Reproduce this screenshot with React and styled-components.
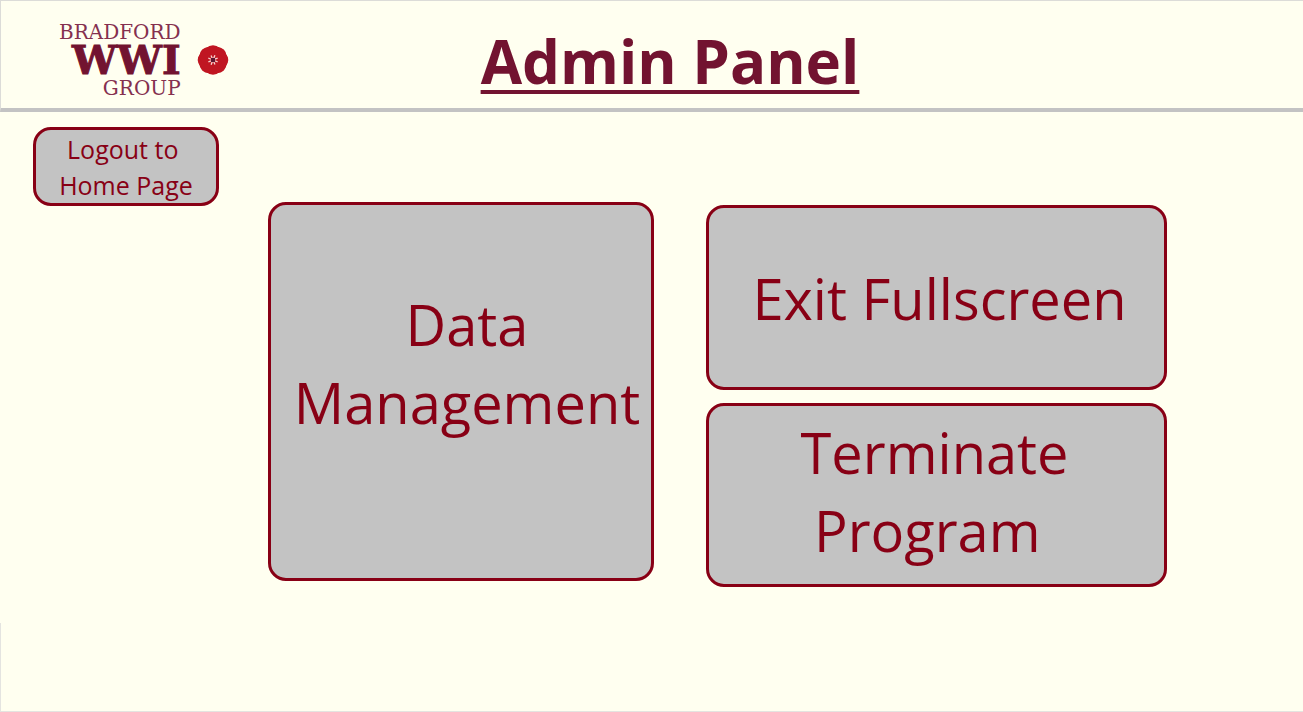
import React from "react";
import styled, { createGlobalStyle } from "styled-components";

const GlobalStyle = createGlobalStyle`
  * { box-sizing: border-box; }
  body { margin: 0; background: #fffff0; }
`;

const Page = styled.div`
  display: flex;
  flex-direction: column;
  min-height: 100vh;
  border-top: 1px solid #dcdcd8;
  border-bottom: 1px solid #e4e4e0;
  background: #fffff0;
  font-family: "Open Sans", "Noto Sans", sans-serif;
`;

const Header = styled.header`
  display: grid;
  grid-template-columns: 1fr auto 1fr;
  align-items: center;
  height: 111px;
  padding-left: 36px;
  border-left: 1px solid #dcdcd8;
  border-bottom: 4px solid #c3c3c3;
`;

const Logo = styled.div`
  display: flex;
  align-items: center;
  gap: 16px;
  padding-top: 10px;
  padding-left: 22px;
`;

const LogoText = styled.div`
  display: flex;
  flex-direction: column;
  align-items: flex-end;
  font-family: "DejaVu Serif", serif;
  color: #721330;
`;

const LogoLine = styled.span`
  font-size: 20px;
  line-height: 24px;
  color: #85304f;
`;

const LogoMark = styled.span`
  font-size: 40px;
  line-height: 32px;
  font-weight: 700;
  -webkit-text-stroke: 1px #721330;
`;

const Title = styled.h1`
  margin: 0;
  padding-top: 12px;
  font-size: 60px;
  line-height: 80px;
  font-weight: 700;
  color: #721330;
  text-decoration: underline;
  text-decoration-thickness: 4px;
  text-underline-offset: 6px;
  text-decoration-skip-ink: none;
`;

const Main = styled.main`
  display: flex;
  flex: 1;
  align-items: flex-start;
  gap: 49px;
  padding: 15px 136px 36px 33px;
`;

const PanelButton = styled.button`
  display: flex;
  flex-direction: column;
  align-items: center;
  justify-content: ${(p) => (p.$top ? "flex-start" : "center")};
  padding: ${(p) => p.$pad || "0"};
  height: ${(p) => p.$height};
  border: 3px solid #880015;
  border-radius: 18px;
  background: #c3c3c3;
  color: #880015;
  font-family: inherit;
  font-size: 56px;
  line-height: 78px;
  white-space: pre;
  cursor: pointer;
`;

const LogoutButton = styled(PanelButton)`
  flex: 0 0 186px;
  font-size: 25px;
  line-height: 36px;
`;

const Actions = styled.div`
  display: grid;
  grid-template-columns: 386fr 461fr;
  gap: 52px;
  flex: 1;
  align-items: start;
  padding-top: 75px;
`;

const Stack = styled.div`
  display: flex;
  flex-direction: column;
  gap: 13px;
  padding-top: 3px;
`;

const Footer = styled.footer`
  height: 88px;
  border-left: 1px solid #e4e4e0;
`;

function Poppy() {
  const petals = [0, 45, 90, 135, 180, 225, 270, 315];
  return (
    <svg width="32" height="32" viewBox="-16 -16 32 32" aria-hidden="true">
      <g fill="#c01622" transform="scale(1.04 1)">
        <circle r="13.8" />
        {petals.map((a) => (
          <circle key={a} r="9" cx="0" cy="-5.7" transform={`rotate(${a})`} />
        ))}
      </g>
      <g stroke="#f5d5d0" strokeWidth="1.3">
        {petals.map((a) => (
          <path key={a} d="M0 -2 L0 -5" transform={`rotate(${a + 22})`} />
        ))}
      </g>
      <rect x="-2" y="-2" width="4" height="4" fill="#5d1530" />
    </svg>
  );
}

export default function App() {
  return (
    <>
      <GlobalStyle />
      <Page>
        <Header>
          <Logo>
            <LogoText>
              <LogoLine>BRADFORD</LogoLine>
              <LogoMark>WWI</LogoMark>
              <LogoLine>GROUP</LogoLine>
            </LogoText>
            <Poppy />
          </Logo>
          <Title>Admin Panel</Title>
        </Header>
        <Main>
          <LogoutButton type="button" $height="79px">
            <span>{"Logout to "}</span>
            <span>Home Page</span>
          </LogoutButton>
          <Actions>
            <PanelButton type="button" $height="379px" $top $pad="80px 0 0 12px">
              <span>Data</span>
              <span>Management</span>
            </PanelButton>
            <Stack>
              <PanelButton type="button" $height="185px" $pad="0 0 0 6px">
                <span>Exit Fullscreen</span>
              </PanelButton>
              <PanelButton type="button" $height="184px" $pad="0 4px 8px 0">
                <span>Terminate</span>
                <span>{"Program "}</span>
              </PanelButton>
            </Stack>
          </Actions>
        </Main>
        <Footer />
      </Page>
    </>
  );
}
